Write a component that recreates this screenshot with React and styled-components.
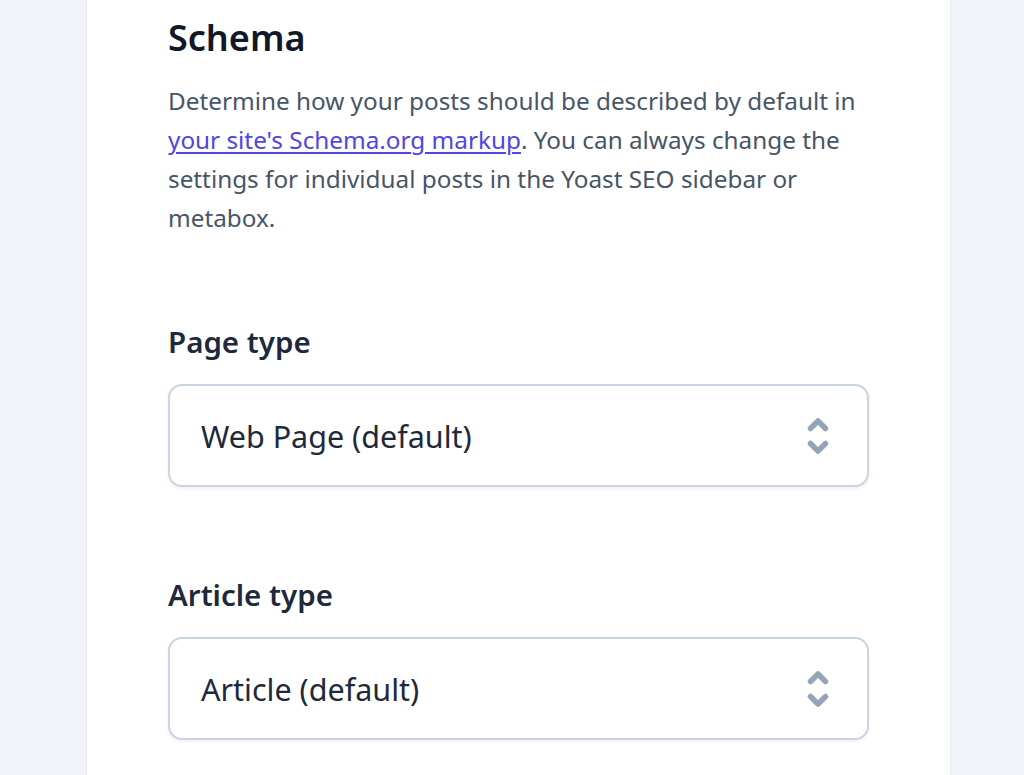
import React from "react";
import styled, { createGlobalStyle } from "styled-components";

const Global = createGlobalStyle`
  html, body { margin: 0; padding: 0; }
  body {
    background: #f0f3f8;
    font-family: "Noto Sans", "Open Sans", sans-serif;
    -webkit-font-smoothing: antialiased;
  }
`;

const Page = styled.div`
  display: flex;
  min-height: 775px;
`;

const Card = styled.main`
  margin-left: 87px;
  width: 863px;
  box-sizing: border-box;
  background: #ffffff;
  padding: 16px 81px 40px;
  box-shadow: 0 0 0 1px #e8ecf2;
  min-height: 775px;
`;

const Title = styled.h2`
  margin: 0;
  font-size: 36px;
  line-height: 44px;
  font-weight: 600;
  color: #111827;
`;

const Description = styled.p`
  margin: 21px 0 0;
  font-size: 24.3px;
  line-height: 39px;
  color: #475569;
`;

const Link = styled.a`
  color: #4f46e5;
  text-decoration: underline;
  text-underline-offset: 3px;
  text-decoration-thickness: 1.5px;
`;

const Field = styled.div`
  display: flex;
  flex-direction: column;
  gap: 22px;
  margin-top: ${(p) => p.$top}px;
`;

const Label = styled.label`
  font-size: 29.5px;
  line-height: 40px;
  font-weight: 600;
  color: #1e293b;
`;

const Select = styled.button`
  display: flex;
  align-items: center;
  justify-content: space-between;
  box-sizing: border-box;
  width: 100%;
  height: 103px;
  padding: 0 24px 0 31px;
  background: #fff;
  border: 2px solid #cbd5e1;
  border-radius: 14px;
  box-shadow: 0 2px 4px rgba(15, 23, 42, 0.06);
  font-family: inherit;
  font-size: 30.5px;
  color: #1e293b;
  text-align: left;
  cursor: pointer;
`;

const Chevrons = () => (
  <svg width="50" height="50" viewBox="0 0 20 20" fill="#94a3b8" stroke="#94a3b8" strokeWidth="0.35" aria-hidden="true">
    <path
      fillRule="evenodd"
      d="M10 3a1 1 0 01.707.293l3 3a1 1 0 01-1.414 1.414L10 5.414 7.707 7.707a1 1 0 01-1.414-1.414l3-3A1 1 0 0110 3zm-3.707 9.293a1 1 0 011.414 0L10 14.586l2.293-2.293a1 1 0 011.414 1.414l-3 3a1 1 0 01-1.414 0l-3-3a1 1 0 010-1.414z"
      clipRule="evenodd"
    />
  </svg>
);

export default function App() {
  return (
    <>
      <Global />
      <Page>
        <Card>
          <Title>Schema</Title>
          <Description>
            Determine how your posts should be described by default in{" "}
            <Link href="#">your site's Schema.org markup</Link>. You can always change the
            settings for individual posts in the Yoast SEO sidebar or metabox.
          </Description>
          <Field $top={85}>
            <Label>Page type</Label>
            <Select>
              <span>Web Page (default)</span>
              <Chevrons />
            </Select>
          </Field>
          <Field $top={88}>
            <Label>Article type</Label>
            <Select>
              <span>Article (default)</span>
              <Chevrons />
            </Select>
          </Field>
        </Card>
      </Page>
    </>
  );
}
